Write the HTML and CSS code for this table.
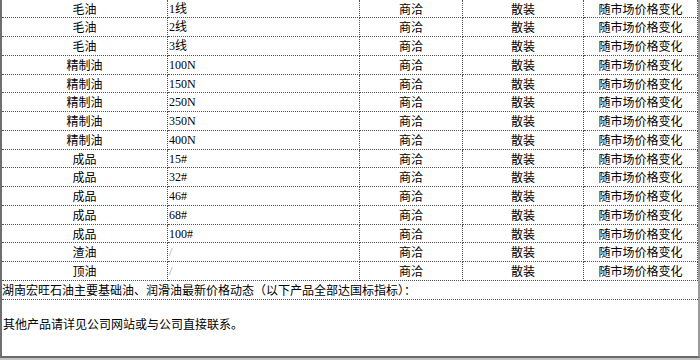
FILE: index.html
```html
<!DOCTYPE html>
<html lang="zh">
<head>
<meta charset="utf-8">
<link rel="stylesheet" href="styles.css">
</head>
<body>
<div class="outer">
<div class="frame">
  <div class="grid">
    <div class="c r18 c1">毛油</div><div class="c r18 c2">1线</div><div class="c r18">商洽</div><div class="c r18">散装</div><div class="c r18">随市场价格变化</div>
    <div class="c r19 c1">毛油</div><div class="c r19 c2">2线</div><div class="c r19">商洽</div><div class="c r19">散装</div><div class="c r19">随市场价格变化</div>
    <div class="c r19 c1">毛油</div><div class="c r19 c2">3线</div><div class="c r19">商洽</div><div class="c r19">散装</div><div class="c r19">随市场价格变化</div>
    <div class="c r19 c1">精制油</div><div class="c r19 c2">100N</div><div class="c r19">商洽</div><div class="c r19">散装</div><div class="c r19">随市场价格变化</div>
    <div class="c r18 c1">精制油</div><div class="c r18 c2">150N</div><div class="c r18">商洽</div><div class="c r18">散装</div><div class="c r18">随市场价格变化</div>
    <div class="c r19 c1">精制油</div><div class="c r19 c2">250N</div><div class="c r19">商洽</div><div class="c r19">散装</div><div class="c r19">随市场价格变化</div>
    <div class="c r19 c1">精制油</div><div class="c r19 c2">350N</div><div class="c r19">商洽</div><div class="c r19">散装</div><div class="c r19">随市场价格变化</div>
    <div class="c r19 c1">精制油</div><div class="c r19 c2">400N</div><div class="c r19">商洽</div><div class="c r19">散装</div><div class="c r19">随市场价格变化</div>
    <div class="c r18 c1">成品</div><div class="c r18 c2">15#</div><div class="c r18">商洽</div><div class="c r18">散装</div><div class="c r18">随市场价格变化</div>
    <div class="c r19 c1">成品</div><div class="c r19 c2">32#</div><div class="c r19">商洽</div><div class="c r19">散装</div><div class="c r19">随市场价格变化</div>
    <div class="c r19 c1">成品</div><div class="c r19 c2">46#</div><div class="c r19">商洽</div><div class="c r19">散装</div><div class="c r19">随市场价格变化</div>
    <div class="c r19 c1">成品</div><div class="c r19 c2">68#</div><div class="c r19">商洽</div><div class="c r19">散装</div><div class="c r19">随市场价格变化</div>
    <div class="c r18 c1">成品</div><div class="c r18 c2">100#</div><div class="c r18">商洽</div><div class="c r18">散装</div><div class="c r18">随市场价格变化</div>
    <div class="c r19 c1">渣油</div><div class="c r19 c2 muted">/</div><div class="c r19">商洽</div><div class="c r19">散装</div><div class="c r19">随市场价格变化</div>
    <div class="c r19 c1">顶油</div><div class="c r19 c2 muted">/</div><div class="c r19">商洽</div><div class="c r19">散装</div><div class="c r19">随市场价格变化</div>
  </div>
  <div class="note">湖南宏旺石油主要基础油、润滑油最新价格动态（以下产品全部达国标指标）：</div>
  <p class="other">其他产品请详见公司网站或与公司直接联系。</p>
</div>
</div>
</body>
</html>
```

FILE: styles.css
```css
html, body {
  margin: 0;
  padding: 0;
  background: #ffffff;
}

body {
  width: 700px;
  height: 360px;
  overflow: hidden;
  font-family: "Liberation Serif", "Noto Sans CJK SC", serif;
  font-size: 12px;
  color: #000;
}

.outer {
  width: 700px;
  height: 360px;
  box-sizing: border-box;
  border-bottom: 2px solid #c4c4c4;
}

.frame {
  width: 700px;
  height: 358px;
  box-sizing: border-box;
  border-left: 2px solid #6f6f6f;
  border-right: 2px solid #9a9a9a;
  border-bottom: 2px solid #6a6a6a;
  display: flex;
  flex-direction: column;
}

.grid {
  display: grid;
  grid-template-columns: 166px 192px 103px 121px 114px;
}

.c {
  box-sizing: border-box;
  border-right: 1px dotted #555;
  border-bottom: 1px dotted #555;
  display: flex;
  align-items: center;
  justify-content: center;
  white-space: nowrap;
  line-height: 14px;
  font-family: "Noto Sans CJK SC", sans-serif;
}

.r18 { height: 18px; }
.r19 { height: 19px; }

.c.c2 {
  justify-content: flex-start;
  padding-left: 1px;
  font-family: "Liberation Serif", "Noto Sans CJK SC", serif;
}

.muted { color: #9a9a9a; }

.note {
  height: 19px;
  box-sizing: border-box;
  border-bottom: 1px dotted #555;
  display: flex;
  align-items: center;
  white-space: nowrap;
  line-height: 14px;
  font-family: "Noto Sans CJK SC", sans-serif;
}

.other {
  margin: 0;
  padding: 16px 0 0 1px;
  line-height: 16px;
  white-space: nowrap;
  font-family: "Noto Sans CJK SC", sans-serif;
}
```
